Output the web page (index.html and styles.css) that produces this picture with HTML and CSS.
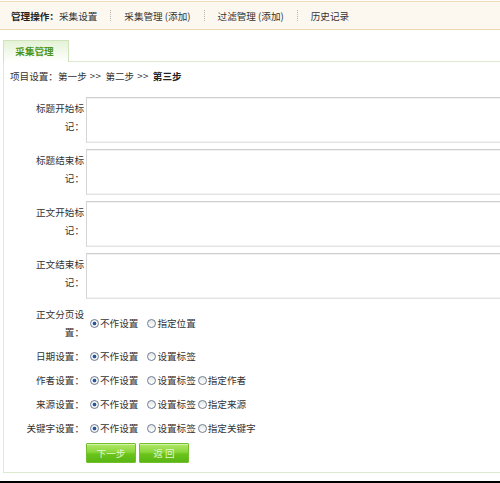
FILE: index.html
```html
<!DOCTYPE html>
<html lang="zh-CN">
<head>
<meta charset="utf-8">
<title>采集管理</title>
<link rel="stylesheet" href="styles.css">
</head>
<body>
<div class="page">
  <div class="topbar">
    <b class="bar-title">管理操作：</b><span>采集设置</span><i class="sep"></i><span>采集管理 (添加)</span><i class="sep"></i><span>过滤管理 (添加)</span><i class="sep"></i><span>历史记录</span>
  </div>
  <div class="tabs">
    <div class="tab">采集管理</div>
    <div class="tab-fill"></div>
  </div>
  <div class="panel">
    <div class="steps">项目设置：第一步<span class="arr">&gt;&gt;</span>第二步<span class="arr">&gt;&gt;</span><b>第三步</b></div>
    <div class="form">
      <div class="row row-text"><div class="lbl">标题开始标记：</div><div class="fld"><textarea class="ta"></textarea></div></div>
      <div class="row row-text"><div class="lbl">标题结束标记：</div><div class="fld"><textarea class="ta"></textarea></div></div>
      <div class="row row-text"><div class="lbl">正文开始标记：</div><div class="fld"><textarea class="ta"></textarea></div></div>
      <div class="row row-text"><div class="lbl">正文结束标记：</div><div class="fld"><textarea class="ta"></textarea></div></div>
      <div class="row row-radio row-tall"><div class="lbl">正文分页设置：</div><div class="fld">
        <label class="opt"><input type="radio" name="r1" checked>不作设置</label>
        <label class="opt"><input type="radio" name="r1">指定位置</label>
      </div></div>
      <div class="row row-radio"><div class="lbl">日期设置：</div><div class="fld">
        <label class="opt"><input type="radio" name="r2" checked>不作设置</label>
        <label class="opt"><input type="radio" name="r2">设置标签</label>
      </div></div>
      <div class="row row-radio"><div class="lbl">作者设置：</div><div class="fld">
        <label class="opt"><input type="radio" name="r3" checked>不作设置</label>
        <label class="opt"><input type="radio" name="r3">设置标签</label>
        <label class="opt"><input type="radio" name="r3">指定作者</label>
      </div></div>
      <div class="row row-radio"><div class="lbl">来源设置：</div><div class="fld">
        <label class="opt"><input type="radio" name="r4" checked>不作设置</label>
        <label class="opt"><input type="radio" name="r4">设置标签</label>
        <label class="opt"><input type="radio" name="r4">指定来源</label>
      </div></div>
      <div class="row row-radio"><div class="lbl">关键字设置：</div><div class="fld">
        <label class="opt"><input type="radio" name="r5" checked>不作设置</label>
        <label class="opt"><input type="radio" name="r5">设置标签</label>
        <label class="opt"><input type="radio" name="r5">指定关键字</label>
      </div></div>
      <div class="actions">
        <button class="btn" type="button">下一步</button>
        <button class="btn" type="button">返 回</button>
      </div>
    </div>
  </div>
</div>
</body>
</html>
```
FILE: styles.css
```css
html, body {
  margin: 0;
  padding: 0;
  background: #000;
}
body {
  font-family: "Noto Sans CJK SC", "Liberation Sans", sans-serif;
  font-size: 9.6px;
  color: #333;
}
.page {
  width: 500px;
  height: 481px;
  background: #fff;
  overflow: hidden;
  padding-top: 1px;
  box-sizing: border-box;
}
.topbar {
  height: 27px;
  border-top: 1px solid #f0dcb9;
  border-bottom: 1px solid #efd9b3;
  background: #fcf8f0;
  display: flex;
  align-items: center;
  padding-left: 11px;
  white-space: nowrap;
  color: #333;
}
.bar-title {
  font-weight: bold;
  color: #222;
}
.sep {
  display: block;
  width: 0;
  height: 11px;
  border-left: 1px dotted #b9b2a6;
  margin: 0 13px;
}
.tabs {
  display: flex;
  margin-top: 10px;
  margin-left: 3px;
}
.tab {
  width: 61px;
  height: 21px;
  border: 1px solid #cfe4bc;
  border-bottom: none;
  background: linear-gradient(#e4f2d6, #ffffff);
  color: #4b951a;
  font-weight: bold;
  text-align: center;
  line-height: 21px;
  padding-right: 3px;
  box-sizing: content-box;
}
.tab-fill {
  flex: 1;
  border-bottom: 1px solid #dcebd0;
}
.panel {
  margin-left: 3px;
  border-left: 1px solid #dcebd0;
  border-bottom: 1px solid #dcebd0;
  padding-bottom: 9px;
}
.steps {
  padding: 7px 0 0 6px;
  line-height: 14px;
  height: 14px;
  color: #333;
  white-space: nowrap;
}
.arr {
  margin: 0 4px 0 3px;
  letter-spacing: 0.5px;
}
.steps b {
  color: #222;
}
.form {
  margin-top: 11px;
  padding-left: 22px;
}
.row {
  display: flex;
  column-gap: 2px;
}
.lbl {
  width: 58px;
  flex: none;
  text-align: right;
  line-height: 18px;
  display: flex;
  align-items: center;
  justify-content: flex-end;
  color: #333;
}
.row-text {
  height: 52px;
}
.row-text .lbl {
  height: 46px;
}
.fld {
  display: flex;
  align-items: center;
  white-space: nowrap;
}
.ta {
  display: block;
  width: 430px;
  height: 46px;
  box-sizing: border-box;
  margin: 0;
  padding: 2px;
  border: 1px solid #d6d6d6;
  border-top-color: #cfcfcf;
  border-bottom-color: #e2e2e2;
  box-shadow: inset 0 1px 0 #f1f1f1, inset 0 -1px 0 #f3f3f3;
  resize: none;
  background: #fff;
}
.row-radio {
  height: 24px;
  align-items: center;
}
.row-tall {
  height: 42px;
}
.row-radio .fld {
  padding-left: 4px;
  height: 100%;
}
.opt {
  display: flex;
  align-items: center;
  margin-right: 9px;
  color: #333;
}
.opt:nth-child(2) {
  margin-right: 2px;
}
.opt input {
  -webkit-appearance: none;
  appearance: none;
  width: 9px;
  height: 9px;
  margin: 0 1px 0 0;
  border: 1px solid #6d7d93;
  border-radius: 50%;
  background: linear-gradient(#e6e6e6, #ffffff);
  box-sizing: border-box;
}
.opt input:checked {
  background: radial-gradient(circle, #2b55a0 0, #2b55a0 1.6px, #f4f4f4 2.2px);
}
.actions {
  display: flex;
  gap: 3px;
  margin: 3px 0 0 60px;
}
.btn {
  width: 50px;
  height: 20px;
  margin: 0;
  padding: 0;
  border: 1px solid #73bf2e;
  border-radius: 1px;
  background: linear-gradient(#b2e769 0%, #8ad63a 45%, #6cc41b 55%, #5ab614 100%);
  box-shadow: inset 0 1px 0 #d2f3a6;
  color: #e4f7cc;
  font-family: "Noto Sans CJK SC", "Liberation Sans", sans-serif;
  font-size: 9.6px;
  line-height: 18px;
}
```
